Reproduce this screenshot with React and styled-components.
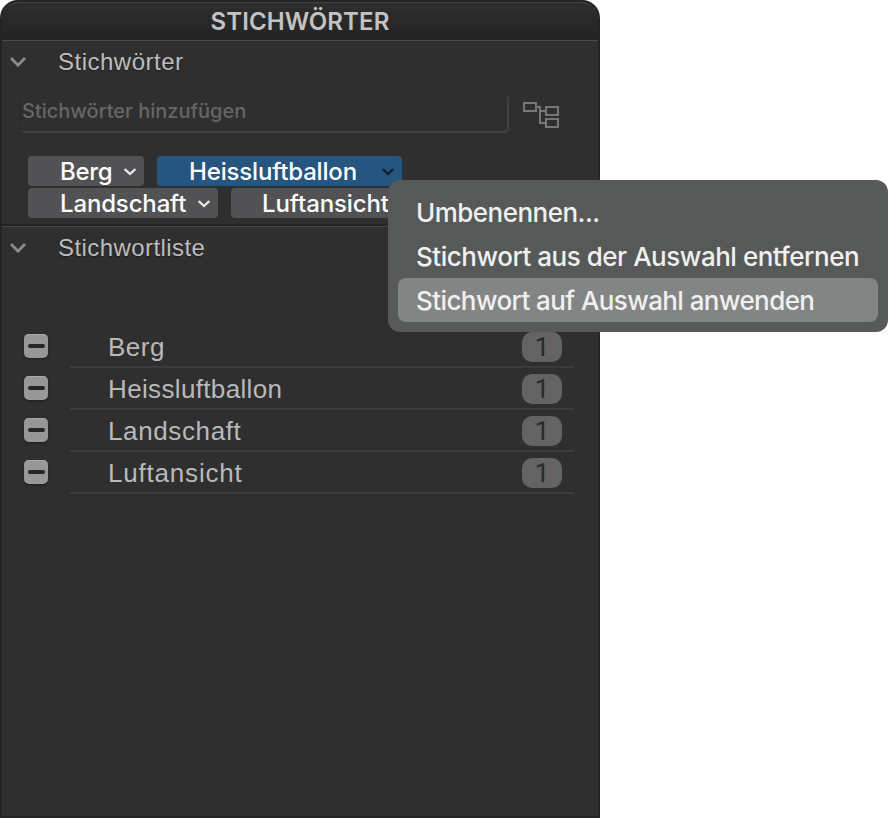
import React, { useState } from "react";
import styled, { createGlobalStyle } from "styled-components";

const GlobalStyle = createGlobalStyle`
  * {
    box-sizing: border-box;
  }
  body {
    margin: 0;
    background: #fff;
  }
`;

const Screen = styled.div`
  position: relative;
  width: 888px;
  height: 818px;
  overflow: hidden;
  font-family: "Liberation Sans", Arial, sans-serif;
`;

const Panel = styled.div`
  width: 600px;
  height: 818px;
  border: 2px solid #242424;
  border-radius: 18px 18px 0 0;
  background: #2f2f2f;
  overflow: hidden;
`;

const Header = styled.header`
  height: 39px;
  border-top: 1px solid #434343;
  border-bottom: 1px solid #4a4a4a;
  border-radius: 16px 16px 0 0;
  background: linear-gradient(#2e2e2e, #232323);
  color: #c3c3c3;
  font-family: Inter, sans-serif;
  font-size: 24px;
  font-weight: 600;
  line-height: 38px;
  letter-spacing: ${({ $spacing }) => $spacing}px;
  text-align: center;
`;

const Section = styled.section`
  height: ${({ $height }) => $height};
  border-bottom: ${({ $last }) => ($last ? "none" : "1px solid #484848")};
  box-shadow: ${({ $last }) => ($last ? "none" : "inset 0 -2px #242424")};
`;

const SectionTitle = styled.div`
  display: flex;
  align-items: center;
  height: 42px;
  padding-left: 8px;
  gap: 32px;
  color: #bdbdbd;
  font-size: 24px;
  line-height: 42px;
  letter-spacing: ${({ $spacing }) => $spacing}px;
  text-shadow: 0 1px 1px #1c1c1c;
`;

const InputRow = styled.div`
  display: flex;
  margin-top: 11px;
  padding-left: 18px;
`;

const KeywordInput = styled.input`
  width: 489px;
  height: 39px;
  padding: 0 0 5px 1px;
  border: 2px solid #424242;
  border-top: 1px solid #2b2b2b;
  border-left: 1px solid #2b2b2b;
  border-radius: 5px;
  background: transparent;
  outline: none;
  color: #bdbdbd;
  font-family: Inter, sans-serif;
  font-size: 20px;
  font-weight: 450;
  letter-spacing: 0;
  &::placeholder {
    color: #666;
    opacity: 1;
  }
`;

const TreeIcon = styled.svg`
  margin: 8px 0 0 14px;
`;

const Chips = styled.div`
  display: flex;
  flex-wrap: wrap;
  gap: 2px 13px;
  width: 440px;
  margin: 23px 0 0 26px;
`;

const Chip = styled.button`
  display: flex;
  align-items: center;
  justify-content: space-between;
  width: ${({ $width }) => $width}px;
  height: 30px;
  padding: 2px 8px 0 ${({ $indent }) => $indent || 32}px;
  border: 0;
  border-radius: 4px;
  background: ${({ $active }) => ($active ? "#25567f" : "#525254")};
  color: #fff;
  font-family: Inter, sans-serif;
  font-size: 24px;
  font-weight: 500;
  line-height: 28px;
  letter-spacing: ${({ $spacing }) => $spacing}px;
  white-space: nowrap;
`;

const List = styled.div`
  padding-top: 57px;
`;

const ListRow = styled.div`
  display: flex;
  align-items: flex-start;
  height: 42px;
  padding-left: 22px;
`;

const MinusBox = styled.div`
  display: flex;
  align-items: center;
  justify-content: center;
  width: 24px;
  height: 24px;
  margin-top: 8px;
  padding-bottom: 1px;
  border-radius: 5px;
  background: #979797;
  box-shadow: inset 0 1px #a9a9a9, 0 1px 2px #1e1e1e;
  &::after {
    content: "";
    width: 17px;
    height: 4px;
    border-radius: 2px;
    background: #262626;
  }
`;

const RowBody = styled.div`
  display: flex;
  justify-content: space-between;
  width: 504px;
  height: 42px;
  margin-left: 22px;
  padding: 0 12px 0 38px;
  border-bottom: 2px solid #3b3b3b;
  color: #b9b9b9;
  font-size: 26px;
  line-height: 42px;
  letter-spacing: ${({ $spacing }) => $spacing}px;
`;

const Count = styled.span`
  width: 40px;
  height: 30px;
  margin-top: 6px;
  border-radius: 10px;
  background: #636363;
  color: #292929;
  font-family: Roboto, sans-serif;
  line-height: 30px;
  letter-spacing: 0;
  text-align: center;
`;

const Menu = styled.div`
  position: absolute;
  left: 388px;
  top: 180px;
  width: 500px;
  height: 152px;
  padding: 10px;
  border-radius: 12px;
  background: #575958;
`;

const MenuItem = styled.div`
  height: 44px;
  padding-left: 18px;
  border-radius: 8px;
  background: ${({ $active }) => ($active ? "#838584" : "transparent")};
  color: #f0f0f0;
  font-family: Inter, sans-serif;
  font-size: 26px;
  font-weight: 450;
  line-height: 45px;
  letter-spacing: ${({ $spacing }) => $spacing}px;
  white-space: nowrap;
`;

const SectionArrow = () => (
  <svg width="16" height="10" viewBox="0 0 16 10" fill="none">
    <path d="M1 1L8 8.2L15 1" stroke="#8a8a8a" strokeWidth="2.8" />
  </svg>
);

const ChipArrow = ({ color }) => (
  <svg width="12" height="8" viewBox="0 0 12 8" fill="none">
    <path
      d="M1.3 1.7L6 6L10.7 1.7"
      stroke={color}
      strokeWidth="2.3"
      strokeLinecap="round"
    />
  </svg>
);

const chips = [
  { name: "Berg", width: 116, spacing: -0.3 },
  { name: "Heissluftballon", width: 245, spacing: -0.17 },
  { name: "Landschaft", width: 190, spacing: -0.15 },
  { name: "Luftansicht", width: 190, spacing: -0.1, indent: 31 },
];

const keywords = [
  { name: "Berg", spacing: 0.5 },
  { name: "Heissluftballon", spacing: 0.35 },
  { name: "Landschaft", spacing: 0.62 },
  { name: "Luftansicht", spacing: 0.8 },
];

const menuItems = [
  { label: "Umbenennen...", spacing: -0.52 },
  { label: "Stichwort aus der Auswahl entfernen", spacing: -0.47 },
  { label: "Stichwort auf Auswahl anwenden", spacing: -0.59 },
];

const App = () => {
  const [selected, setSelected] = useState("Heissluftballon");
  const [value, setValue] = useState("");

  return (
    <Screen>
      <GlobalStyle />
      <Panel>
        <Header $spacing={0.08}>STICHWÖRTER</Header>
        <Section $height="186px">
          <SectionTitle $spacing={0.5}>
            <SectionArrow />
            Stichwörter
          </SectionTitle>
          <InputRow>
            <KeywordInput
              placeholder="Stichwörter hinzufügen"
              value={value}
              onChange={(e) => setValue(e.currentTarget.value)}
            />
            <TreeIcon width="36" height="26" viewBox="0 0 36 26" fill="none">
              <g stroke="#77777a" strokeWidth="2">
                <rect x="1" y="1" width="12" height="8" />
                <rect x="23" y="5" width="12" height="8" />
                <rect x="23" y="17" width="12" height="8" />
                <path d="M14 5H17V21H22M17 9H22" />
              </g>
            </TreeIcon>
          </InputRow>
          <Chips>
            {chips.map((chip) => (
              <Chip
                key={chip.name}
                $width={chip.width}
                $spacing={chip.spacing}
                $indent={chip.indent}
                $active={chip.name === selected}
                onClick={() => setSelected(chip.name)}
              >
                {chip.name}
                <ChipArrow
                  color={chip.name === selected ? "#10202d" : "#e6e6e6"}
                />
              </Chip>
            ))}
          </Chips>
        </Section>
        <Section $height="589px" $last>
          <SectionTitle $spacing={0.43}>
            <SectionArrow />
            Stichwortliste
          </SectionTitle>
          <List>
            {keywords.map((keyword) => (
              <ListRow key={keyword.name}>
                <MinusBox />
                <RowBody $spacing={keyword.spacing}>
                  {keyword.name}
                  <Count>1</Count>
                </RowBody>
              </ListRow>
            ))}
          </List>
        </Section>
      </Panel>
      <Menu>
        {menuItems.map((item, index) => (
          <MenuItem
            key={item.label}
            $spacing={item.spacing}
            $active={index === 2}
          >
            {item.label}
          </MenuItem>
        ))}
      </Menu>
    </Screen>
  );
};

export default App;
